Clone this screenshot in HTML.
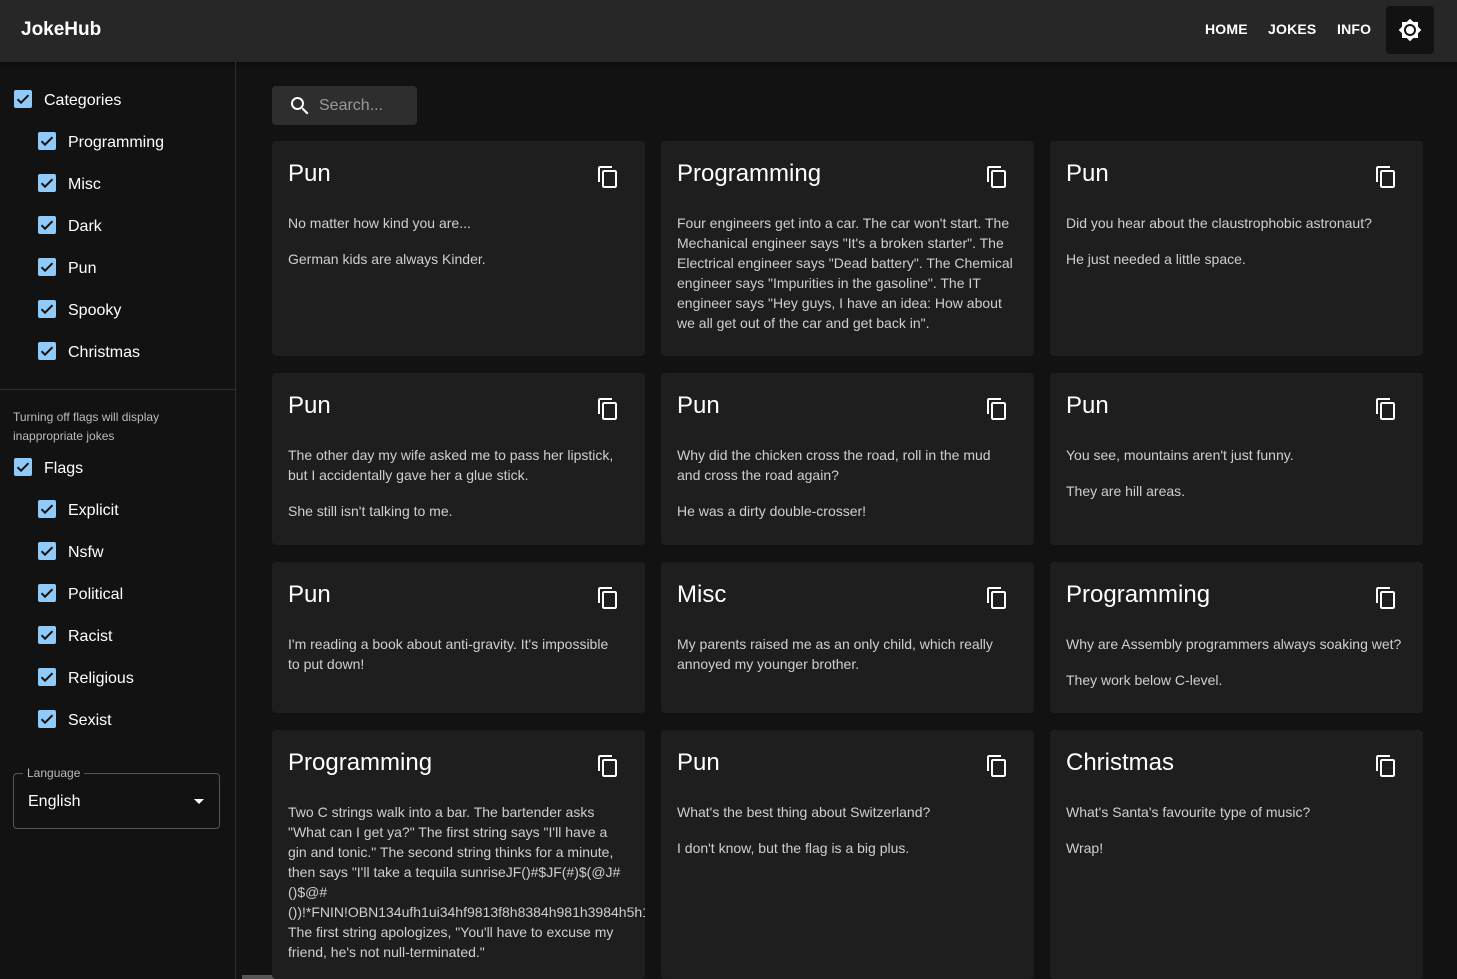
<!DOCTYPE html>
<html style="overflow:hidden;width:1457px;height:979px"><head><meta charset="utf-8"><style>
*{box-sizing:border-box;margin:0;padding:0}
body{width:1457px;height:979px;overflow:hidden;background:#121212;font-family:"Liberation Sans",sans-serif;color:#fff;position:relative}
.hdr{position:absolute;left:0;top:0;width:1457px;height:62px;background:#272727;box-shadow:0 2px 4px rgba(0,0,0,.4)}
.logo{position:absolute;left:21px;top:19px;font-size:19px;font-weight:bold}
.nav{position:absolute;top:21px;font-size:14px;font-weight:bold;letter-spacing:.2px}
.tbtn{position:absolute;left:1386px;top:6px;width:48px;height:48px;background:#121212;border-radius:4px}
.side{position:absolute;left:0;top:62px;width:236px;height:917px;border-right:1px solid #2e2e2e}
.cb{position:absolute;width:18px;height:18px;background:#90caf9;border-radius:2px}
.cb svg{position:absolute;left:0;top:0}
.lbl{position:absolute;font-size:16px;color:#fff}
.hr{position:absolute;left:0;top:389px;width:236px;height:1px;background:#2e2e2e}
.note{position:absolute;left:13px;top:408px;font-size:12px;line-height:19px;color:#bbb}
.sel{position:absolute;left:13px;top:773px;width:207px;height:56px;border:1px solid #555;border-radius:4px}
.sel .l{position:absolute;left:9px;top:-8px;background:#121212;padding:0 4px;font-size:12px;color:#bbb}
.sel .v{position:absolute;left:14px;top:19px;font-size:16px}
.sel .a{position:absolute;right:15px;top:25px;border-left:5px solid transparent;border-right:5px solid transparent;border-top:5px solid #fff}
.search{position:absolute;left:272px;top:86px;width:145px;height:39px;background:#2e2e2e;border-radius:4px}
.search span{position:absolute;left:47px;top:11px;font-size:16px;color:#999}
.card{position:absolute;width:373px;background:#1e1e1e;border-radius:4px;overflow:hidden}
.card h2{position:absolute;left:16px;top:17px;font-size:24px;font-weight:normal;line-height:32px}
.card .cp{position:absolute;left:324px;top:24px}
.card .b{position:absolute;left:16px;top:72px;font-size:14px;line-height:20px;color:#cfcfcf;white-space:nowrap}
.card .b p+p{margin-top:16px}
</style></head><body>
<div class="hdr">
<div class="logo">JokeHub</div>
<div class="nav" style="left:1205px">HOME</div>
<div class="nav" style="left:1268px">JOKES</div>
<div class="nav" style="left:1337px">INFO</div>
<div class="tbtn"><svg width="48" height="48" viewBox="-12 -12 48 48"><path fill="#fff" d="M20 8.69V4h-4.69L12 .69 8.690 4H4v4.69L.69 12 4 15.31V20h4.69L12 23.31 15.31 20H20v-4.69L23.31 12 20 8.69zM12 18c-3.31 0-6-2.69-6-6s2.69-6 6-6 6 2.69 6 6-2.69 6-6 6zm0-10c-2.21 0-4 1.79-4 4s1.79 4 4 4 4-1.79 4-4-1.79-4-4-4z"/></svg></div>
</div>
<div class="side">
<div class="hr" style="top:327px"></div>
</div>
<div id="cbs"></div>
<div class="note">Turning off flags will display<br>inappropriate jokes</div>
<div class="sel"><div class="l">Language</div><div class="v">English</div><div class="a"></div></div>
<div style="position:absolute;left:242px;top:975px;width:48px;height:4px;background:#555"></div>

<div class="search"><svg style="position:absolute;left:16px;top:8px" width="24" height="24" viewBox="0 0 24 24"><path fill="#fff" d="M15.5 14h-.79l-.28-.27A6.47 6.470 0 0 0 16 9.5 6.5 6.5 0 1 0 9.5 16c1.61 0 3.09-.59 4.23-1.57l.27.28v.79l5 4.99L20.49 19l-4.99-5zm-6 0C7.01 14 5 11.99 5 9.5S7.01 5 9.5 5 14 7.01 14 9.5 11.99 14 9.5 14z"/></svg><span>Search...</span></div>

<div id="cards"></div>
<script>
var cb='<svg width="18" height="18" viewBox="0 0 18 18"><path d="M3.5 9.2l3.5 3.5 7.5-7.5" stroke="#121212" stroke-width="2" fill="none"/></svg>';
var items=[[14,99,44,"Categories"],[38,141,68,"Programming"],[38,183,68,"Misc"],[38,225,68,"Dark"],[38,267,68,"Pun"],[38,309,68,"Spooky"],[38,351,68,"Christmas"],[14,467,44,"Flags"],[38,509,68,"Explicit"],[38,551,68,"Nsfw"],[38,593,68,"Political"],[38,635,68,"Racist"],[38,677,68,"Religious"],[38,719,68,"Sexist"]];
var h='';items.forEach(function(i){h+='<div class="cb" style="left:'+i[0]+'px;top:'+(i[1]-9)+'px">'+cb+'</div><div class="lbl" style="left:'+i[2]+'px;top:'+(i[1]-7)+'px">'+i[3]+'</div>';});
document.getElementById('cbs').innerHTML=h;
var cp='<svg width="24" height="24" viewBox="0 0 24 24"><path fill="#fff" d="M16 1H4c-1.1 0-2 .9-2 2v14h2V3h12V1zm3 4H8c-1.1 0-2 .9-2 2v14c0 1.1.9 2 2 2h11c1.1 0 2-.9 2-2V7c0-1.1-.9-2-2-2zm0 16H8V7h11v14z"/></svg>';
var xs=[272,661,1050],rows=[[141,215],[373,172],[562,151],[730,249]];
var data=[
["Pun",["No matter how kind you are...","German kids are always Kinder."]],
["Programming",["Four engineers get into a car. The car won't start. The<br>Mechanical engineer says \"It's a broken starter\". The<br>Electrical engineer says \"Dead battery\". The Chemical<br>engineer says \"Impurities in the gasoline\". The IT<br>engineer says \"Hey guys, I have an idea: How about<br>we all get out of the car and get back in\"."]],
["Pun",["Did you hear about the claustrophobic astronaut?","He just needed a little space."]],
["Pun",["The other day my wife asked me to pass her lipstick,<br>but I accidentally gave her a glue stick.","She still isn't talking to me."]],
["Pun",["Why did the chicken cross the road, roll in the mud<br>and cross the road again?","He was a dirty double-crosser!"]],
["Pun",["You see, mountains aren't just funny.","They are hill areas."]],
["Pun",["I'm reading a book about anti-gravity. It's impossible<br>to put down!"]],
["Misc",["My parents raised me as an only child, which really<br>annoyed my younger brother."]],
["Programming",["Why are Assembly programmers always soaking wet?","They work below C-level."]],
["Programming",["Two C strings walk into a bar. The bartender asks<br>\"What can I get ya?\" The first string says \"I'll have a<br>gin and tonic.\" The second string thinks for a minute,<br>then says \"I'll take a tequila sunriseJF()#$JF(#)$(@J#<br>()$@#<br>())!*FNIN!OBN134ufh1ui34hf9813f8h8384h981h3984h5h1<br>The first string apologizes, \"You'll have to excuse my<br>friend, he's not null-terminated.\""]],
["Pun",["What's the best thing about Switzerland?","I don't know, but the flag is a big plus."]],
["Christmas",["What's Santa's favourite type of music?","Wrap!"]]];
var c='';data.forEach(function(d,k){var r=rows[Math.floor(k/3)],x=xs[k%3];
c+='<div class="card" style="left:'+x+'px;top:'+r[0]+'px;height:'+r[1]+'px"><h2>'+d[0]+'</h2><div class="cp">'+cp+'</div><div class="b"><p>'+d[1].join('</p><p>')+'</p></div></div>';});
document.getElementById('cards').innerHTML=c;
</script>
</body></html>
